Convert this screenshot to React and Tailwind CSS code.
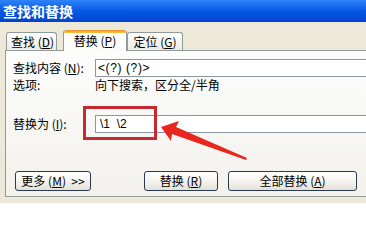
import React from "react";

const U = ({ c }) => (
  <span>
    (<span className="underline underline-offset-1">{c}</span>)
  </span>
);

function Tab({ label, k, active, className }) {
  if (active) {
    return (
      <div
        className={`relative z-10 h-[21px] -mb-[1px] flex items-start justify-center pt-[3px] border border-b-0 border-[#919b9c] border-t-0 rounded-t-[3px] bg-gradient-to-b from-[#ffffff] to-[#fbfbf9] ${className}`}
      >
        <div className="absolute left-0 right-0 top-0 h-[3px] rounded-t-[3px] bg-gradient-to-b from-[#e68b2c] to-[#ffc73c]" />
        <span className="mt-[1px]">
          {label}&nbsp;<U c={k} />
        </span>
      </div>
    );
  }
  return (
    <div
      className={`h-[18px] flex items-center justify-center border border-b-0 border-[#919b9c] rounded-t-[3px] bg-gradient-to-b from-[#ffffff] to-[#ecebe5] ${className}`}
    >
      <span>
        {label}&nbsp;<U c={k} />
      </span>
    </div>
  );
}

function Btn({ children, className }) {
  return (
    <div
      className={`h-[20px] flex items-center justify-center border border-[#2b3a4f] rounded-[3px] bg-gradient-to-b from-[#ffffff] via-[#f5f4ef] to-[#e3e1d7] ${className}`}
    >
      <span>{children}</span>
    </div>
  );
}

export default function App() {
  return (
    <div className="relative w-[366px] h-[203px] overflow-hidden bg-[#ece9d8] text-[12px] leading-[14px] text-black font-['Noto_Sans_CJK_SC','Liberation_Sans',sans-serif]">
      {/* Title bar */}
      <div className="h-[22px] flex items-center pl-[3px] bg-gradient-to-b from-[#2f83f7] via-[#0758e6] to-[#0043cf]">
        <span className="text-white font-bold text-[14px] leading-[16px]">
          查找和替换
        </span>
      </div>

      {/* Tabs */}
      <div className="h-[28px] flex items-end pl-[6px]">
        <Tab label="查找" k="D" className="w-[51px] pl-[2px]" />
        <div className="w-[6px]" />
        <Tab label="替换" k="P" active className="w-[64px]" />
        <Tab label="定位" k="G" className="w-[56px]" />
      </div>

      {/* Panel */}
      <div className="ml-[5px] h-[147px] border border-r-0 border-[#919b9c] bg-gradient-to-b from-[#fdfdfc] to-[#f2f1ec] pl-[7px]">
        {/* Row 1 */}
        <div className="mt-[8px] flex items-center h-[18px]">
          <div className="w-[82px]">
            查找内容&nbsp;<U c="N" />:
          </div>
          <div className="flex-1 h-[18px] flex items-center border border-r-0 border-[#8c969e] bg-white pl-[2px] font-['Liberation_Sans',sans-serif] tracking-[0.6px]">
            &lt;(?) (?)&gt;
          </div>
        </div>
        {/* Row 2 */}
        <div className="mt-[1px] flex items-center h-[14px]">
          <div className="w-[82px]">选项:</div>
          <div>向下搜索，区分全/半角</div>
        </div>
        {/* Row 3 */}
        <div className="mt-[23px] flex items-center h-[18px]">
          <div className="w-[82px]">
            替换为&nbsp;<U c="I" />:
          </div>
          <div className="flex-1 h-[18px] flex items-center border border-r-0 border-[#8c969e] bg-white pl-[4px] font-['Liberation_Sans',sans-serif]">
            \1&nbsp;&nbsp;\2
          </div>
        </div>
        {/* Buttons */}
        <div className="mt-[38px] flex items-center">
          <Btn className="ml-[2px] w-[76px]">
            更多&nbsp;<U c="M" />&nbsp;&nbsp;&gt;&gt;
          </Btn>
          <Btn className="ml-[53px] w-[74px]">
            替换&nbsp;<U c="R" />
          </Btn>
          <Btn className="ml-[10px] w-[129px]">
            全部替换&nbsp;<U c="A" />
          </Btn>
        </div>
      </div>

      {/* Red highlight rectangle */}
      <div className="absolute left-[83px] top-[106px] w-[74px] h-[34px] border-[3px] border-[#c42a30]" />

      {/* Red arrow */}
      <svg
        className="absolute left-0 top-0"
        width="366"
        height="203"
        viewBox="0 0 366 203"
      >
        <polygon
          points="161,127 179,121 176,127 247,158 246,160 172,134 171,141"
          fill="#e8261e"
        />
      </svg>
    </div>
  );
}
